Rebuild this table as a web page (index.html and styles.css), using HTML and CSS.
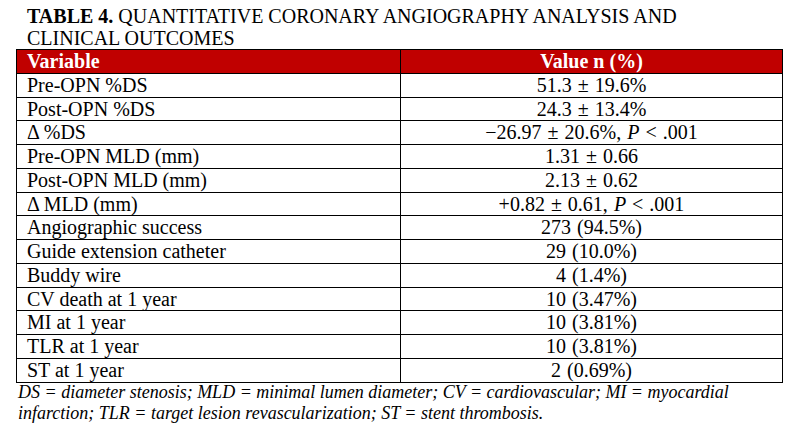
FILE: index.html
```html
<!DOCTYPE html>
<html lang="en">
<head>
  <meta charset="UTF-8">
  <title>Table 4</title>
  <link rel="stylesheet" href="styles.css">
</head>
<body>
  <div class="page">
    <h1 class="caption"><b>TABLE 4.</b> QUANTITATIVE CORONARY ANGIOGRAPHY ANALYSIS AND<br>CLINICAL OUTCOMES</h1>

    <table class="data-table">
      <thead>
        <tr>
          <th class="col-var">Variable</th>
          <th class="col-val">Value n (%)</th>
        </tr>
      </thead>
      <tbody>
        <tr><td>Pre-OPN %DS</td><td>51.3 ± 19.6%</td></tr>
        <tr><td>Post-OPN %DS</td><td>24.3 ± 13.4%</td></tr>
        <tr><td>Δ %DS</td><td>−26.97 ± 20.6%, <i>P</i> &lt; .001</td></tr>
        <tr><td>Pre-OPN MLD (mm)</td><td>1.31 ± 0.66</td></tr>
        <tr><td>Post-OPN MLD (mm)</td><td>2.13 ± 0.62</td></tr>
        <tr><td>Δ MLD (mm)</td><td>+0.82 ± 0.61, <i>P</i> &lt; .001</td></tr>
        <tr><td>Angiographic success</td><td>273 (94.5%)</td></tr>
        <tr><td>Guide extension catheter</td><td>29 (10.0%)</td></tr>
        <tr><td>Buddy wire</td><td>4 (1.4%)</td></tr>
        <tr><td>CV death at 1 year</td><td>10 (3.47%)</td></tr>
        <tr><td>MI at 1 year</td><td>10 (3.81%)</td></tr>
        <tr><td>TLR at 1 year</td><td>10 (3.81%)</td></tr>
        <tr><td>ST at 1 year</td><td>2 (0.69%)</td></tr>
      </tbody>
    </table>

    <p class="footnote">DS = diameter stenosis; MLD = minimal lumen diameter; CV = cardiovascular; MI = myocardial<br>infarction; TLR = target lesion revascularization; ST = stent thrombosis.</p>
  </div>
</body>
</html>
```

FILE: styles.css
```css
/* Page */
body {
  margin: 0;
  padding: 0;
  background-color: #ffffff;
  color: #000;
  font-family: 'Liberation Serif', 'Times New Roman', serif;
}

.page {
  padding: 5px 19px 0 16px;
}

/* Caption above the table */
.caption {
  margin: 0 0 0 11px;
  font-size: 20px;
  font-weight: normal;
  line-height: 22px;
}

.caption b {
  font-weight: bold;
}

/* Table */
.data-table {
  width: 767px;
  border-collapse: collapse;
  font-size: 20px;
  line-height: 22.75px;
}

.data-table th,
.data-table td {
  border: 1px solid #000;
  padding: 0 10px;
}

.data-table th {
  background-color: #c00000;
  color: #fff;
  font-weight: bold;
}

.data-table .col-var {
  width: 363px;
  text-align: left;
}

.data-table .col-val {
  text-align: center;
}

.data-table td:last-child {
  text-align: center;
  word-spacing: 1px;
}

/* Note under the table */
.footnote {
  margin: -1px 0 0 2px;
  font-size: 18px;
  font-style: italic;
  line-height: 21px;
}
```
